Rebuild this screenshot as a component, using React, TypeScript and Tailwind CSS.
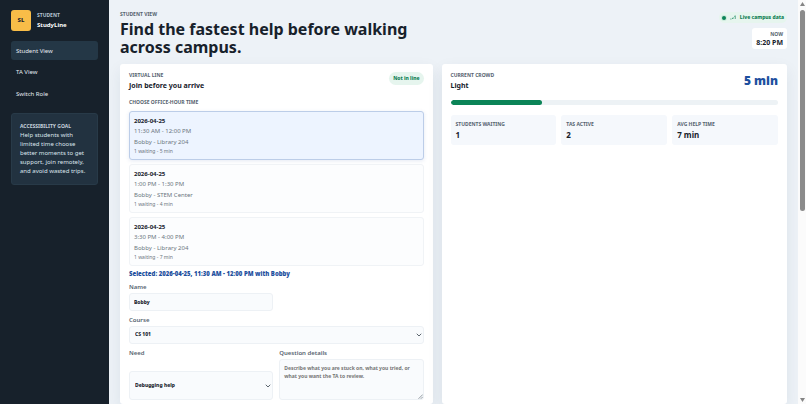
import type { ReactNode } from "react";

const slots = [
  { id: "a", date: "2026-04-25", time: "11:30 AM - 12:00 PM", place: "Bobby - Library 204", wait: "1 waiting - 5 min" },
  { id: "b", date: "2026-04-25", time: "1:00 PM - 1:30 PM", place: "Bobby - STEM Center", wait: "1 waiting - 4 min" },
  { id: "c", date: "2026-04-25", time: "3:30 PM - 4:00 PM", place: "Bobby - Library 204", wait: "1 waiting - 7 min" },
];

const stats = [
  { label: "Students waiting", value: "1" },
  { label: "TAs active", value: "2" },
  { label: "Avg help time", value: "7 min" },
];

function Eyebrow({ children, className = "text-[#56636f]" }: { children: ReactNode; className?: string }) {
  return <p className={`text-[5px] leading-[8px] font-bold uppercase ${className}`}>{children}</p>;
}

function Chevron() {
  return (
    <svg className="pointer-events-none absolute top-1/2 right-[2px] h-[4px] w-[6px] -translate-y-1/2" viewBox="0 0 12 8" fill="none" stroke="#4a545e" strokeWidth="1.8" aria-hidden="true">
      <path d="M1.5 1.5 L6 6 L10.5 1.5" />
    </svg>
  );
}

function Sidebar() {
  return (
    <aside className="w-[109px] shrink-0 bg-[#17212b] px-[11px] pt-[10px] text-[#e4ebf1]">
      <div className="flex items-center gap-[6px]">
        <span className="grid h-[21px] w-[20px] place-items-center rounded-[3px] bg-[#f9bd48] text-[6px] font-extrabold text-[#17212b]">SL</span>
        <div>
          <Eyebrow className="text-[#b4c3d0]">Student</Eyebrow>
          <strong className="block text-[6px] leading-[12px] font-bold text-white">StudyLine</strong>
        </div>
      </div>
      <nav className="mt-[10px] flex flex-col gap-[2px] text-[6px]" aria-label="Main">
        <a href="#student" className="flex h-[19px] items-center rounded-[3px] bg-[#243746] px-[5px] pt-px">Student View</a>
        <a href="#ta" className="flex h-[20px] items-center px-[5px] pt-px">TA View</a>
        <a href="#role" className="flex h-[19px] items-center px-[5px] pt-px">Switch Role</a>
      </nav>
      <section className="mt-[10px] rounded-[3px] border border-[#283a48] bg-[#223240] px-[8px] py-[8px]">
        <Eyebrow className="text-[#c5d1db]">Accessibility goal</Eyebrow>
        <p className="mt-[1px] text-[6px] leading-[9px] text-[#dbe4ec]">Help students with limited time choose better moments to get support, join remotely, and avoid wasted trips.</p>
      </section>
    </aside>
  );
}

function Header() {
  return (
    <header className="flex items-start justify-between">
      <div className="pt-[10px]">
        <Eyebrow>Student view</Eyebrow>
        <h1 className="mt-[2px] max-w-[310px] text-[16px] leading-[18px] font-bold text-[#17212b]">Find the fastest help before walking across campus.</h1>
      </div>
      <div className="flex flex-col items-end gap-[5px] pt-[12px]">
        <div className="flex h-[11px] items-center gap-[4px] rounded-full bg-[#e6f5ee] px-[3px] text-[5px] font-extrabold text-[#0b7d52]">
          <span className="h-[4px] w-[4px] rounded-full bg-[#0b8457] ring-1 ring-[#cdebdc]" />
          <svg className="h-[5px] w-[6px]" viewBox="0 0 12 10" fill="none" stroke="#0b8457" strokeWidth="1.3" aria-hidden="true">
            <path d="M0.5 8 H3 M5 8 V6 H8 M10.5 8 V1.5 L8.5 3" />
          </svg>
          Live campus data
        </div>
        <div className="rounded-[3px] bg-white px-[4px] pt-[2px] pb-[2px] text-right">
          <Eyebrow>Now</Eyebrow>
          <time className="block text-[7px] leading-[9px] font-bold text-[#17212b]">8:20 PM</time>
        </div>
      </div>
    </header>
  );
}

const card = "rounded-[3px] bg-white px-[9px] pt-[7px] shadow-[0_6px_16px_rgba(30,50,80,0.08)]";
const field = "w-full appearance-none rounded-[3px] border border-[#edf1f5] bg-[#f9fbfd] text-[5px] font-extrabold text-[#17212b]";
const label = "block text-[6px] leading-[8px] font-semibold text-[#56636f]";

function QueueCard() {
  return (
    <section className={card}>
      <div className="flex items-start justify-between">
        <div>
          <Eyebrow>Virtual line</Eyebrow>
          <h2 className="mt-px text-[7px] leading-[12px] font-bold text-[#17212b]">Join before you arrive</h2>
        </div>
        <span className="mt-px flex h-[13px] items-center rounded-full bg-[#e6f5ee] px-[4px] text-[5px] font-extrabold text-[#0b7d52]">Not in line</span>
      </div>
      <form>
        <fieldset className="mt-[6px]">
          <legend><Eyebrow>Choose office-hour time</Eyebrow></legend>
          <div className="mt-[5px] flex flex-col gap-[4px]">
            {slots.map((s, i) => (
              <button
                type="button"
                key={s.id}
                aria-pressed={i === 0}
                className={`block w-full rounded-[3px] border px-[4px] pt-[4px] pb-[3px] text-left text-[6px] text-[#6b7680] ${i === 0 ? "border-[#bccde8] bg-[#edf4ff] shadow-[0_1px_4px_rgba(29,78,158,0.12)]" : "border-[#f0f3f6] bg-[#fcfdfe]"}`}
              >
                <strong className="block leading-[10px] font-bold text-[#17212b]">{s.date}</strong>
                <span className="block leading-[11px]">{s.time}</span>
                <span className="block leading-[10px]">{s.place}</span>
                <small className="block text-[5px] leading-[9px]">{s.wait}</small>
              </button>
            ))}
          </div>
        </fieldset>
        <p className="mt-[4px] text-[6px] leading-[8px] font-black text-[#1d4f9e]">Selected: 2026-04-25, 11:30 AM - 12:00 PM with Bobby</p>
        <div className="mt-[5px] grid grid-cols-2 gap-x-[6px] gap-y-[5px]">
          <div>
            <label htmlFor="name" className={label}>Name</label>
            <input id="name" defaultValue="Bobby" className={`${field} mt-[2px] block h-[18px] px-[4px]`} />
          </div>
          <div className="col-span-2">
            <label htmlFor="course" className={label}>Course</label>
            <div className="relative mt-[2px]">
              <select id="course" className={`${field} block h-[18px] px-[5px]`}><option>CS 101</option></select>
              <Chevron />
            </div>
          </div>
          <div className="flex flex-col justify-between">
            <label htmlFor="need" className={label}>Need</label>
            <div className="relative">
              <select id="need" className={`${field} block h-[29px] px-[5px]`}><option>Debugging help</option></select>
              <Chevron />
            </div>
          </div>
          <div>
            <label htmlFor="details" className={label}>Question details</label>
            <div className="relative mt-[2px]">
              <textarea id="details" placeholder="Describe what you are stuck on, what you tried, or what you want the TA to review." className={`${field} block h-[41px] resize-none overflow-hidden px-[4px] py-[4px] leading-[8px] placeholder:font-bold placeholder:text-[#757575]`} />
              <svg className="pointer-events-none absolute right-[1px] bottom-[1px] h-[5px] w-[5px]" viewBox="0 0 5 5" stroke="#69737d" strokeWidth="0.7" aria-hidden="true">
                <path d="M0.5 4.8 L4.8 0.5 M2.8 4.8 L4.8 2.8" />
              </svg>
            </div>
          </div>
        </div>
      </form>
    </section>
  );
}

function CrowdCard() {
  return (
    <section className={card}>
      <div className="flex items-start justify-between">
        <div>
          <Eyebrow>Current crowd</Eyebrow>
          <h2 className="mt-px text-[7px] leading-[12px] font-bold text-[#17212b]">Light</h2>
        </div>
        <strong className="pt-[2px] text-[12px] leading-[16px] font-black text-[#1d4f9e]">5 min</strong>
      </div>
      <div className="mt-[8px] h-[5px] overflow-hidden rounded-full bg-[#edf2f5]">
        <div className="h-full w-[28%] rounded-full bg-[#0b8457]" />
      </div>
      <dl className="mt-[10px] grid grid-cols-3 gap-[5px]">
        {stats.map((s) => (
          <div key={s.label} className="rounded-[3px] bg-[#f5f8fc] px-[5px] pt-[5px] pb-[4px]">
            <dt><Eyebrow>{s.label}</Eyebrow></dt>
            <dd className="mt-[1px] text-[8px] leading-[12px] font-bold text-[#17212b]">{s.value}</dd>
          </div>
        ))}
      </dl>
    </section>
  );
}

export default function App() {
  return (
    <div className="flex h-screen overflow-hidden bg-[#edf2f7] font-['Noto_Sans','Open_Sans',sans-serif]">
      <Sidebar />
      <main className="flex min-w-0 flex-1 flex-col px-[11px]">
        <Header />
        <div className="mt-[8px] grid flex-1 grid-cols-[19fr_21fr] gap-[9px]">
          <QueueCard />
          <CrowdCard />
        </div>
      </main>
      <div className="flex w-[8px] shrink-0 flex-col items-center bg-[#fbfbfb] py-[2px]" aria-hidden="true">
        <svg className="h-[4px] w-[5px]" viewBox="0 0 5 4" fill="#858585"><path d="M2.5 0 L5 4 H0 Z" /></svg>
        <div className="mt-[4px] h-[201px] w-[5px] rounded-full bg-[#8b8b8b]" />
        <svg className="mt-auto h-[4px] w-[5px]" viewBox="0 0 5 4" fill="#858585"><path d="M0 0 H5 L2.5 4 Z" /></svg>
      </div>
    </div>
  );
}
